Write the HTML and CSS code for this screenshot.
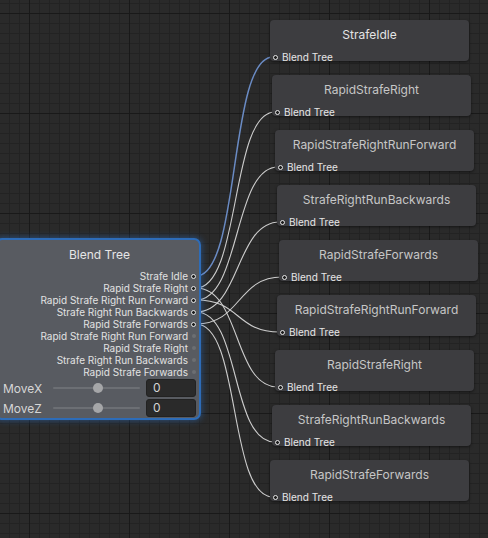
FILE: index.html
```html
<!DOCTYPE html>
<html lang="en">
<head>
<meta charset="UTF-8" />
<title>Animator - Blend Tree</title>
<link rel="stylesheet" href="styles.css">
</head>
<body>
<div class="graph">
    <svg class="links" width="488" height="538" viewBox="0 0 488 538">
        <path class="link" d="M196 288 C241 288 230 112 275 112" />
        <path class="link" d="M196 288 C241 288 233 387 278 387" />
        <path class="link" d="M196 300 C241 300 233 167 278 167" />
        <path class="link" d="M196 300 C241 300 235 332 280 332" />
        <path class="link" d="M196 312 C241 312 235 222 280 222" />
        <path class="link" d="M196 312 C241 312 230 442 275 442" />
        <path class="link" d="M196 324 C241 324 237 277 282 277" />
        <path class="link" d="M196 324 C241 324 228 497 273 497" />
        <path class="link active" d="M196 276 C241 276 228 57 273 57" />
    </svg>

    <div class="tree">
        <div class="tree-title">Blend Tree</div>
        <div class="outputs">
            <div class="out">Strafe Idle<span class="port"></span></div>
            <div class="out">Rapid Strafe Right<span class="port"></span></div>
            <div class="out">Rapid Strafe Right Run Forward<span class="port"></span></div>
            <div class="out">Strafe Right Run Backwards<span class="port"></span></div>
            <div class="out">Rapid Strafe Forwards<span class="port"></span></div>
            <div class="out">Rapid Strafe Right Run Forward<span class="port off"></span></div>
            <div class="out">Rapid Strafe Right<span class="port off"></span></div>
            <div class="out">Strafe Right Run Backwards<span class="port off"></span></div>
            <div class="out">Rapid Strafe Forwards<span class="port off"></span></div>
        </div>
        <div class="params">
            <div class="param">
                <span class="param-name">MoveX</span>
                <div class="slider"><div class="thumb"></div></div>
                <div class="field">0</div>
            </div>
            <div class="param">
                <span class="param-name">MoveZ</span>
                <div class="slider"><div class="thumb"></div></div>
                <div class="field">0</div>
            </div>
        </div>
    </div>

    <div class="state n1 current"><div class="state-title">StrafeIdle</div><div class="state-in"><span class="port"></span>Blend Tree</div></div>
    <div class="state n2"><div class="state-title">RapidStrafeRight</div><div class="state-in"><span class="port"></span>Blend Tree</div></div>
    <div class="state n3"><div class="state-title">RapidStrafeRightRunForward</div><div class="state-in"><span class="port"></span>Blend Tree</div></div>
    <div class="state n4"><div class="state-title">StrafeRightRunBackwards</div><div class="state-in"><span class="port"></span>Blend Tree</div></div>
    <div class="state n5"><div class="state-title">RapidStrafeForwards</div><div class="state-in"><span class="port"></span>Blend Tree</div></div>
    <div class="state n6"><div class="state-title">RapidStrafeRightRunForward</div><div class="state-in"><span class="port"></span>Blend Tree</div></div>
    <div class="state n7"><div class="state-title">RapidStrafeRight</div><div class="state-in"><span class="port"></span>Blend Tree</div></div>
    <div class="state n8"><div class="state-title">StrafeRightRunBackwards</div><div class="state-in"><span class="port"></span>Blend Tree</div></div>
    <div class="state n9"><div class="state-title">RapidStrafeForwards</div><div class="state-in"><span class="port"></span>Blend Tree</div></div>
</div>
</body>
</html>
```

FILE: styles.css
```css
* {
    margin: 0;
    padding: 0;
    box-sizing: border-box;
}
body {
    font-family: Inter, "Noto Sans", sans-serif;
    background: #2a2a2a;
}
.graph {
    position: relative;
    width: 488px;
    height: 538px;
    overflow: hidden;
    background-color: #2a2a2a;
    background-image:
        linear-gradient(to right, #191919 1px, transparent 1px),
        linear-gradient(to bottom, #191919 1px, transparent 1px),
        linear-gradient(to right, #232323 1px, transparent 1px),
        linear-gradient(to bottom, #232323 1px, transparent 1px);
    background-size: 100px 100px, 100px 100px, 10px 10px, 10px 10px;
    background-position: 29px 13px, 29px 13px, 9px 3px, 9px 3px;
}
.links {
    position: absolute;
    left: 0;
    top: 0;
}
.link {
    fill: none;
    stroke: #cdcdcd;
    stroke-width: 1.1;
}
.link.active {
    stroke: #6a8bc4;
    stroke-width: 1.5;
}

/* ports */
.port {
    width: 5px;
    height: 5px;
    border-radius: 50%;
    border: 1px solid #e8e8e8;
    background: #1e1e1e;
    flex-shrink: 0;
}
.port.off {
    width: 4px;
    height: 4px;
    margin: 0 0.5px;
    border: none;
    background: #6c6e72;
}

/* blend tree node */
.tree {
    position: absolute;
    left: -3px;
    top: 240px;
    width: 202px;
    height: 178px;
    padding: 0 3px 1px 6px;
    background: #585b61;
    border-radius: 5px;
    box-shadow: 0 0 0 2px #2d6cb8, 0 0 6px 3px rgba(45, 115, 205, 0.45);
    color: #e2e2e2;
}
.tree-title {
    height: 30px;
    line-height: 30px;
    text-align: center;
    font-size: 12px;
    color: #e6e6e6;
}
.outputs {
    display: flex;
    flex-direction: column;
}
.out {
    height: 12px;
    display: flex;
    justify-content: flex-end;
    align-items: center;
    gap: 3px;
    font-size: 10px;
    line-height: 12px;
    white-space: nowrap;
}
.params {
    margin-top: 1px;
    display: flex;
    flex-direction: column;
    gap: 2px;
}
.param {
    height: 18px;
    display: flex;
    align-items: center;
}
.param-name {
    width: 50px;
    font-size: 12px;
    color: #d6d6d6;
}
.slider {
    position: relative;
    width: 87px;
    height: 2px;
    margin-right: 6px;
    background: #6c6f74;
    border-radius: 1px;
}
.thumb {
    position: absolute;
    left: 40px;
    top: -4px;
    width: 10px;
    height: 10px;
    border-radius: 50%;
    background: #a5a6a8;
}
.field {
    width: 50px;
    height: 18px;
    padding-left: 6px;
    background: #2a2a2a;
    border: 1px solid #222;
    border-radius: 3px;
    font-size: 12px;
    line-height: 16px;
    color: #d4d4d4;
}

/* state nodes */
.state {
    position: absolute;
    width: 199px;
    height: 41px;
    background: #3d3d40;
    border-radius: 4px;
    box-shadow: 0 1px 3px rgba(0, 0, 0, 0.5);
}
.state-title {
    height: 30px;
    line-height: 30px;
    text-align: center;
    font-size: 12px;
    color: #c6c6c6;
    white-space: nowrap;
}
.state.current .state-title {
    color: #e4e4e4;
}
.state-in {
    margin-top: 1px;
    height: 12px;
    padding-left: 3px;
    display: flex;
    align-items: center;
    gap: 4px;
    font-size: 10px;
    color: #e6e6e6;
}
.n1 { left: 270px; top: 20px; }
.n2 { left: 272px; top: 75px; }
.n3 { left: 275px; top: 130px; }
.n4 { left: 277px; top: 185px; }
.n5 { left: 279px; top: 240px; }
.n6 { left: 277px; top: 295px; }
.n7 { left: 275px; top: 350px; }
.n8 { left: 272px; top: 405px; }
.n9 { left: 270px; top: 460px; }
```
